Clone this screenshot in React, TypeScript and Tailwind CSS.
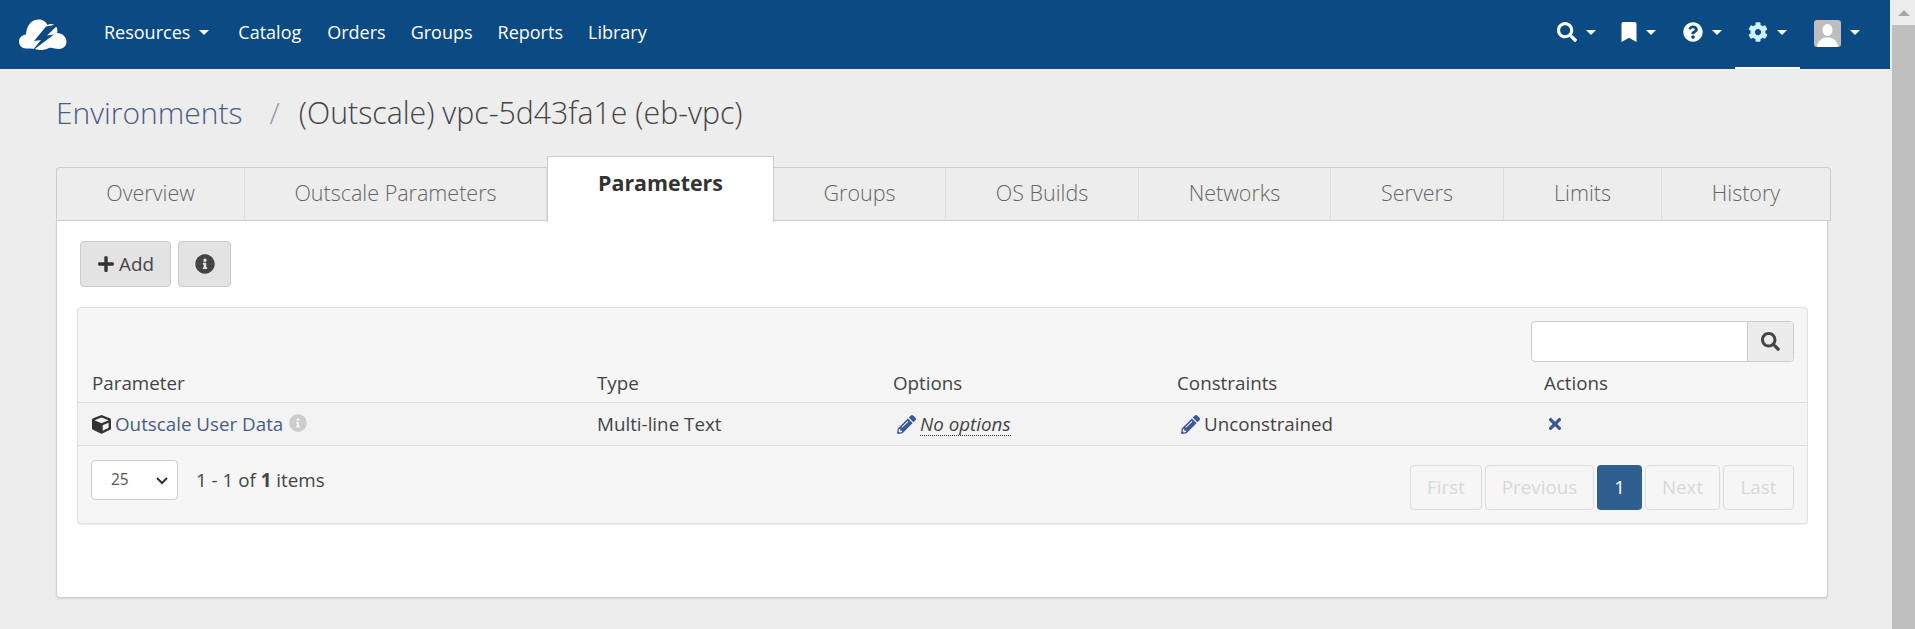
import { FaBookmark, FaCog, FaCube, FaInfoCircle, FaPencilAlt, FaPlus, FaQuestionCircle, FaSearch, FaTimes } from "react-icons/fa";

const Caret = ({ className = "" }: { className?: string }) => (
  <span className={`inline-block w-0 h-0 border-x-[5px] border-x-transparent border-t-[5px] border-t-white ${className}`} />
);

const Logo = () => (
  <svg width="48" height="32" viewBox="0 0 48 32" className="ml-[19px] mt-[5px]">
    <path
      d="M7 29.5C2.5 29.5 0 26 0 22.5C0 18.5 3 16 7 15.5C7.5 8 11 1 19 0.5C24 0.2 27 3 28.5 6C31 4 36 4.5 38 9C38.5 11 38.5 12.5 38 14C43.5 14 47.5 18 47.5 23C47.5 27 44 30 40 30C36 30 33 28 30 29C25 31.5 20 31.5 16 30C12.5 29 10 29.5 7 29.5Z"
      fill="#ffffff"
    />
    <polygon points="40,5 27,7.5 15,22 22,21 13,32 35,15.5 28,16.5" fill="#0c4a84" />
  </svg>
);

const navLinks = [
  { label: "Catalog", cls: "ml-[29px]" },
  { label: "Orders", cls: "ml-[26px]" },
  { label: "Groups", cls: "ml-[25px]" },
  { label: "Reports", cls: "ml-[25px]" },
  { label: "Library", cls: "ml-[25px]" },
];

const tabs = [
  { label: "Overview", w: "w-[189px]" },
  { label: "Outscale Parameters", w: "w-[302px]" },
  { label: "Parameters", w: "w-[227px]", active: true },
  { label: "Groups", w: "w-[172px]" },
  { label: "OS Builds", w: "w-[193px]" },
  { label: "Networks", w: "w-[192px]" },
  { label: "Servers", w: "w-[173px]" },
  { label: "Limits", w: "w-[158px]" },
  { label: "History", w: "w-[169px]" },
];

const pages = [
  { label: "First", w: "w-[72px]" },
  { label: "Previous", w: "w-[109px]" },
  { label: "1", w: "w-[45px]", active: true },
  { label: "Next", w: "w-[75px]" },
  { label: "Last", w: "w-[71px]" },
];

const App = () => {
  return (
    <div className="flex h-[629px] w-[1915px] overflow-hidden bg-[#ededed] font-['Open_Sans',sans-serif] text-[18.8px] text-[#444]">
      <div className="w-[1892px] shrink-0">
        {/* Top navigation */}
        <nav className="relative flex h-[69px] w-[1890px] items-center bg-[#0c4a84] pb-[5px] text-white">
          <Logo />
          <div className="ml-[37px] flex items-center text-[18px] font-normal">
            <span>Resources</span>
            <Caret className="ml-[9px]" />
            {navLinks.map((link) => (
              <span key={link.label} className={link.cls}>
                {link.label}
              </span>
            ))}
          </div>
          <div className="ml-auto mr-[30px] flex items-center">
            <FaSearch className="h-[20px] w-[20px]" />
            <Caret className="ml-[9px]" />
            <FaBookmark className="ml-[25px] h-[20px] w-[16px]" />
            <Caret className="ml-[9px]" />
            <FaQuestionCircle className="ml-[27px] h-[20px] w-[20px]" />
            <Caret className="ml-[9px]" />
            <FaCog className="ml-[26px] h-[20px] w-[20px] text-[#cdf3ff]" />
            <Caret className="ml-[9px] border-t-[#cdf3ff]" />
            <div className="ml-[27px] mt-[3px] flex h-[27px] w-[27px] items-end justify-center overflow-hidden rounded-[3px] bg-[#bdbdbd]">
              <svg width="27" height="27" viewBox="0 0 27 27">
                <ellipse cx="13.5" cy="10" rx="5" ry="6" fill="#fff" />
                <path d="M3 27C3 21 8 18.5 11 17.5H16C19 18.5 24 21 24 27Z" fill="#fff" />
              </svg>
            </div>
            <Caret className="ml-[9px]" />
          </div>
          <div className="absolute bottom-0 left-[1735px] h-[2px] w-[65px] bg-white" />
        </nav>

        <main className="pl-[56px] pr-[61px]">
          {/* Breadcrumb */}
          <div className="flex h-[87px] items-center pt-[1px] text-[30px] font-light leading-none">
            <span className="text-[#4a5c85]">Environments</span>
            <span className="ml-[27px] text-[#999]">/</span>
            <span className="ml-[19px] text-[30.3px] text-[#444]">(Outscale) vpc-5d43fa1e (eb-vpc)</span>
          </div>

          {/* Tabs */}
          <div className="flex h-[65px] items-end">
            {tabs.map((tab) =>
              tab.active ? (
                <div
                  key={tab.label}
                  className={`${tab.w} relative z-10 -mb-[1px] flex h-[66px] shrink-0 items-start justify-center border-x border-t border-[#ccc] bg-white pt-[11px] text-[21.4px] leading-[29px] font-bold text-[#333]`}
                >
                  {tab.label}
                </div>
              ) : (
                <div
                  key={tab.label}
                  className={`${tab.w} flex h-[54px] shrink-0 items-center justify-center border-y border-r border-y-[#ccc] border-r-[#ddd] bg-[#ededed] pb-[1px] text-[21.5px] font-light text-[#666] first:rounded-tl-[4px] first:border-l first:border-l-[#ccc] last:rounded-tr-[4px] last:border-r-[#ccc]`}
                >
                  {tab.label}
                </div>
              ),
            )}
          </div>

          {/* Panel */}
          <div className="h-[377px] w-[1772px] rounded-b-[4px] border-x border-b border-[#d0d0d0] bg-white pl-[23px] pt-[20px] shadow-[0_1px_2px_rgba(0,0,0,0.1)]">
            <div className="flex gap-[7px]">
              <button className="flex h-[46px] w-[91px] items-center justify-center gap-[4px] rounded-[4px] border border-[#ccc] bg-[#e3e3e3] text-[18.8px] text-[#444]">
                <FaPlus className="h-[18px] w-[18px] text-[#333]" />
                Add
              </button>
              <button className="flex h-[46px] w-[53px] items-center justify-center rounded-[4px] border border-[#ccc] bg-[#e3e3e3]">
                <FaInfoCircle className="-mt-[1px] h-[20px] w-[20px] text-[#444]" />
              </button>
            </div>

            {/* Table card */}
            <div className="ml-[-3px] mt-[20px] h-[217px] w-[1731px] rounded-[4px] border border-[#e0e0e0] bg-[#f6f6f6] shadow-[0_1px_1px_rgba(0,0,0,0.06)]">
              <div className="flex justify-end pr-[13px] pt-[13px]">
                <div className="flex h-[41px] w-[263px] overflow-hidden rounded-[4px] border border-[#ccc] bg-white">
                  <div className="flex-1" />
                  <div className="flex w-[46px] items-center justify-center border-l border-[#ccc] bg-[#ececec]">
                    <FaSearch className="h-[19px] w-[19px] text-[#444]" />
                  </div>
                </div>
              </div>

              <div className="grid h-[41px] grid-cols-[505px_296px_284px_367px_1fr] items-center border-b border-[#ddd] pl-[14px] pt-[1px] text-[18.8px] leading-[24px] text-[#444]">
                <span>Parameter</span>
                <span>Type</span>
                <span>Options</span>
                <span>Constraints</span>
                <span>Actions</span>
              </div>

              <div className="grid h-[43px] grid-cols-[505px_296px_284px_367px_1fr] items-center border-b border-[#ddd] bg-[#f3f3f3] pl-[14px] text-[18.8px] leading-[24px]">
                <span className="flex items-center">
                  <FaCube className="h-[19px] w-[19px] text-[#333]" />
                  <span className="ml-[4px] text-[#4a5c85]">Outscale User Data</span>
                  <FaInfoCircle className="ml-[6px] -mt-[2px] h-[18px] w-[18px] text-[#ccc]" />
                </span>
                <span>Multi-line Text</span>
                <span className="flex items-center pl-[4px]">
                  <FaPencilAlt className="h-[19px] w-[19px] text-[#3b5998]" />
                  <span className="ml-[4px] border-b border-dotted border-[#333] italic leading-[22px] text-[#444]">No options</span>
                </span>
                <span className="flex items-center pl-[4px]">
                  <FaPencilAlt className="h-[19px] w-[19px] text-[#3b5998]" />
                  <span className="ml-[4px]">Unconstrained</span>
                </span>
                <span className="pl-[3px]">
                  <FaTimes className="h-[18px] w-[16px] text-[#3b5998]" />
                </span>
              </div>

              <div className="flex items-start pl-[13px] pr-[13px]">
                <div className="relative mt-[14px] flex h-[40px] w-[87px] items-center rounded-[4px] border border-[#ccc] bg-white pl-[19px] text-[15.5px] text-[#555]">
                  25
                  <svg className="absolute right-[8px] top-[15px]" width="14" height="9" viewBox="0 0 14 9">
                    <path d="M2 2L7 7L12 2" fill="none" stroke="#333" strokeWidth="2" />
                  </svg>
                </div>
                <span className="ml-[18px] mt-[22px] text-[18.8px] leading-[24px]">
                  1 - 1 of <b>1</b> items
                </span>
                <div className="ml-auto mt-[19px] flex gap-[3px]">
                  {pages.map((page) => (
                    <div
                      key={page.label}
                      className={
                        page.active
                          ? `${page.w} flex h-[45px] items-center justify-center rounded-[4px] bg-[#2f5f8f] text-[18.8px] text-white`
                          : `${page.w} flex h-[45px] items-center justify-center rounded-[4px] border border-[#ddd] bg-[#f6f6f6] text-[18.8px] text-[#d8d8d8]`
                      }
                    >
                      {page.label}
                    </div>
                  ))}
                </div>
              </div>
            </div>
          </div>
        </main>
      </div>

      {/* Window scrollbar */}
      <div className="flex w-[23px] shrink-0 flex-col bg-[#ededed]">
        <div className="flex h-[25px] items-center justify-center">
          <span className="h-0 w-0 border-x-[6px] border-b-[6px] border-x-transparent border-b-[#aaa]" />
        </div>
        <div className="flex-1 bg-[#bfbfbf]" />
      </div>
    </div>
  );
};

export default App;
